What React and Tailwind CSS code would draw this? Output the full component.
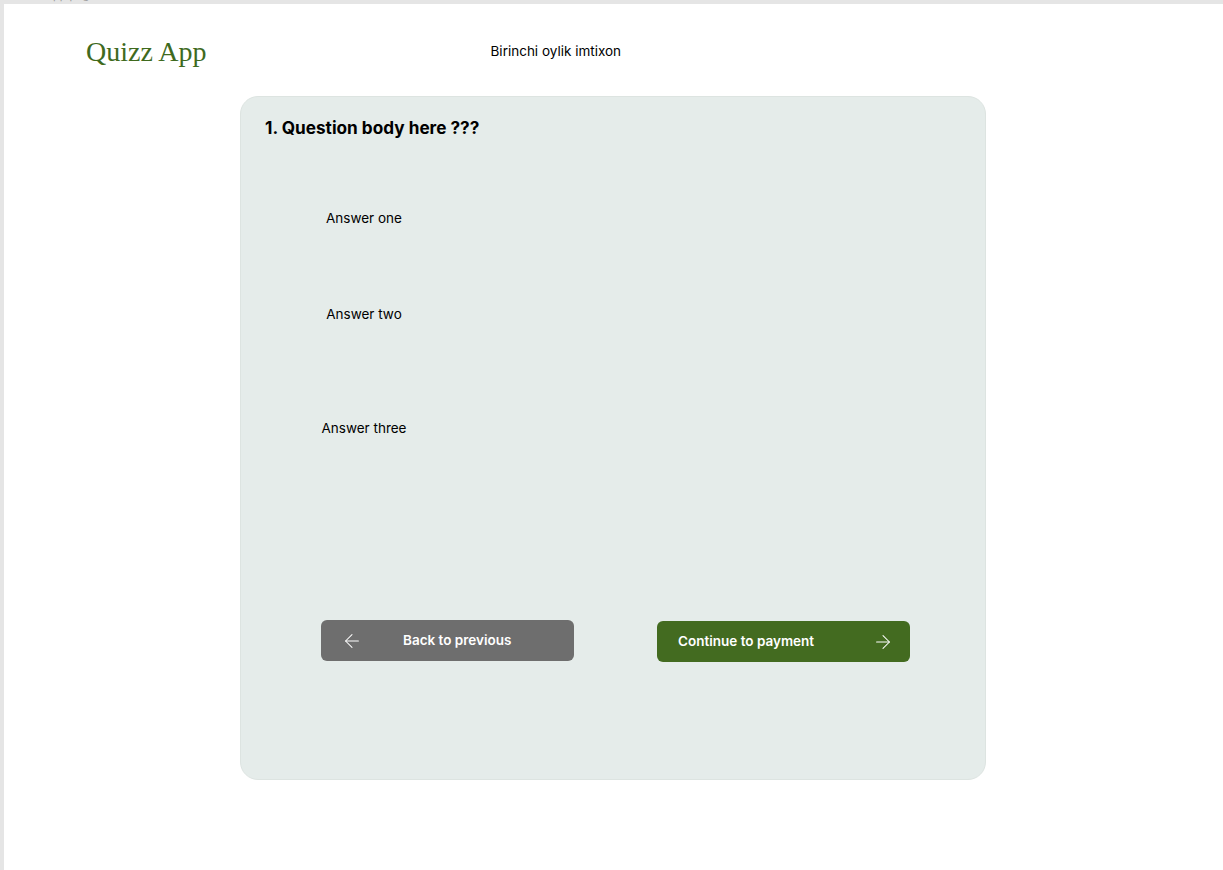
import { ArrowLeft, ArrowRight } from 'lucide-react';

const answers = [
  { id: 1, text: 'Answer one', gap: 'mt-[68px]' },
  { id: 2, text: 'Answer two', gap: 'mt-[76px]' },
  { id: 3, text: 'Answer three', gap: 'mt-[94px]' },
];

function App() {
  return (
    <div className="relative min-h-screen bg-[#e5e5e5] pl-[4px] pt-[4px] font-['Inter',sans-serif] overflow-hidden">
      {/* frame label, mostly cut off at the top */}
      <span className="absolute left-[14px] top-[-10px] text-[11px] text-[#9a9a9a] leading-none">
        Quizz app page
      </span>
      <div className="bg-white h-[866px]">
        <header className="flex items-center h-[92px] pl-[82px]">
          <h1 className="font-['Liberation_Serif','DejaVu_Serif',serif] text-[28px] leading-none text-[#3f6a1e] mt-[4px]">
            Quizz App
          </h1>
          <p className="ml-[284px] text-[13.5px] text-black leading-5 mt-[2px]">Birinchi oylik imtixon</p>
        </header>

        <main className="ml-[236px] w-[746px] h-[684px] rounded-[18px] border border-[#dde4e1] bg-[#e5ecea] pt-[19px] pl-[24px]">
          <h2 className="text-[17.2px] font-bold leading-6 text-black">1. Question body here ???</h2>

          <div className="ml-[56px] w-[86px] flex flex-col">
            {answers.map((a) => (
              <div key={a.id} className={`${a.gap} text-center text-[13.5px] leading-5 text-black whitespace-nowrap`}>
                {a.text}
              </div>
            ))}
          </div>

          <div className="flex items-start ml-[56px] mt-[182px]">
            <button className="flex items-center w-[253px] h-[41px] rounded-[6px] bg-[#6e6e6e] pl-[20px] text-white">
              <ArrowLeft className="w-[22px] h-[22px]" strokeWidth={1.1} />
              <span className="ml-[40px] text-[13.5px] font-semibold">Back to previous</span>
            </button>
            <button className="flex items-center justify-between w-[253px] h-[41px] mt-px ml-[83px] rounded-[6px] bg-[#436b20] pl-[21px] pr-[16px] text-white">
              <span className="text-[13.5px] font-semibold">Continue to payment</span>
              <ArrowRight className="w-[22px] h-[22px]" strokeWidth={1.1} />
            </button>
          </div>
        </main>
      </div>
    </div>
  );
}

export default App;
